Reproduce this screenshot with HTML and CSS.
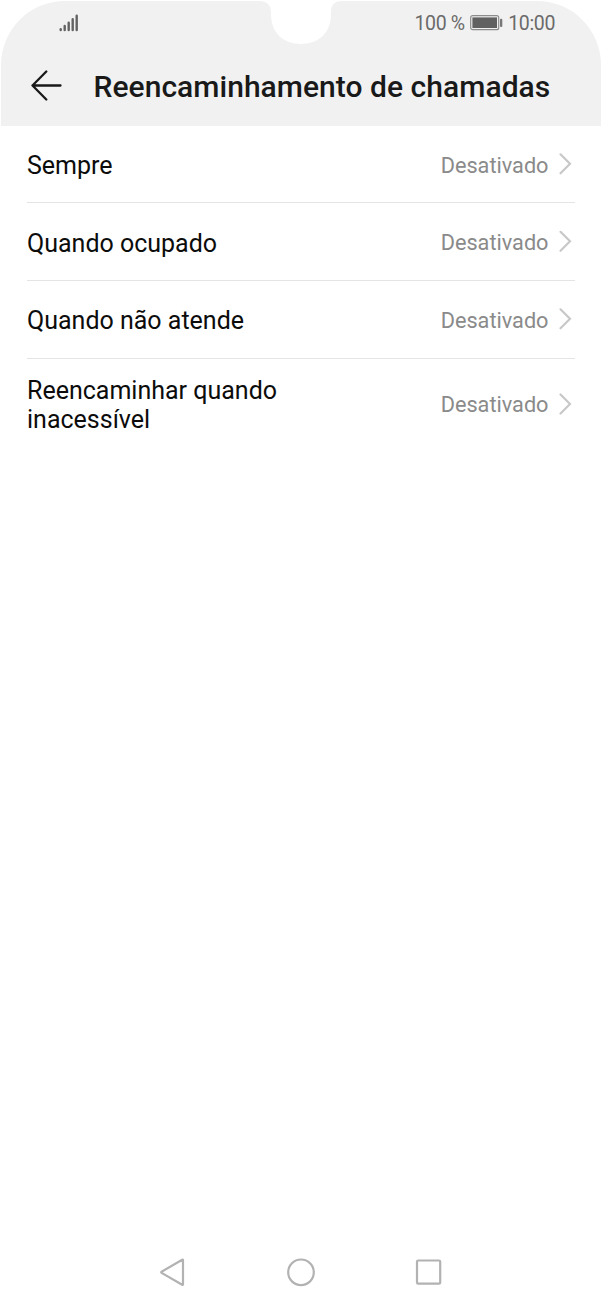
FILE: index.html
```html
<!DOCTYPE html>
<html lang="pt">
<head>
<meta charset="utf-8">
<title>Reencaminhamento de chamadas</title>
<link rel="stylesheet" href="styles.css">
</head>
<body>
<div class="phone">
  <header class="header">
    <svg class="notch" width="90" height="46" viewBox="0 0 90 46"><path d="M0.500 0H91V1H86.500C79.500 1 76 5 76 12V14C76 33 63.500 44 46 44S16 33 16 14V12C16 5 11.500 1 4.500 1H0.500Z" fill="#fff"/></svg>
    <div class="status">
      <svg class="signal" width="20" height="18" viewBox="0 0 20 18"><path d="M1.700 15.300V16M5.700 12V16M9.700 8.700V16M13.700 5.200V16M17.700 1.700V16" fill="none" stroke="#626262" stroke-width="2.400" stroke-linecap="round"/></svg>
      <span class="percent">100 %</span>
      <svg class="battery" width="34" height="16" viewBox="0 0 34 16"><rect x="1.700" y="0.700" width="28" height="14" rx="2" fill="none" stroke="#8c8c8c" stroke-width="1.200"/><rect x="3.400" y="2.400" width="24.600" height="10.600" fill="#616161"/><rect x="31" y="3.700" width="2.300" height="8.300" rx="1" fill="#777"/></svg>
      <span class="clock">10:00</span>
    </div>
    <div class="titlebar">
      <svg class="back" width="32" height="32" viewBox="0 0 32 32"><path d="M30.500 15.500H2.500M16.300 1.500L2.500 15.500L16.300 29.500" fill="none" stroke="#191919" stroke-width="2.300" stroke-linecap="round" stroke-linejoin="round"/></svg>
      <h1 class="title">Reencaminhamento de chamadas</h1>
    </div>
  </header>
  <main class="list">
    <div class="row"><span class="label">Sempre</span><span class="value">Desativado</span><svg class="chevron" width="14" height="24" viewBox="0 0 14 24"><path d="M2.500 2.300L12 11.800L2.500 21.300" /></svg></div>
    <div class="row"><span class="label">Quando ocupado</span><span class="value">Desativado</span><svg class="chevron" width="14" height="24" viewBox="0 0 14 24"><path d="M2.500 1.800L12 11.300L2.500 20.800" /></svg></div>
    <div class="row"><span class="label">Quando não atende</span><span class="value">Desativado</span><svg class="chevron" width="14" height="24" viewBox="0 0 14 24"><path d="M2.500 2.300L12 11.800L2.500 21.300" /></svg></div>
    <div class="row row-tall"><span class="label">Reencaminhar quando<br>inacessível</span><span class="value">Desativado</span><svg class="chevron" width="14" height="24" viewBox="0 0 14 24"><path d="M2.500 1.500L12 11L2.500 20.500" /></svg></div>
  </main>
  <nav class="nav">
    <svg width="30" height="30" viewBox="0 0 30 30"><path d="M25.200 2.700Q26 2.300 26 3.300V27.300Q26 28.300 25.200 27.800L4.600 15.900Q3.700 15.300 4.600 14.700Z"/></svg>
    <svg width="30" height="30" viewBox="0 0 30 30"><circle cx="15" cy="15.300" r="12.800"/></svg>
    <svg width="30" height="30" viewBox="0 0 30 30"><rect x="3" y="3.500" width="23.200" height="23.200" rx="1.200"/></svg>
  </nav>
</div>
</body>
</html>
```
FILE: styles.css
```css
body {
  margin: 0;
  background: #fff;
  font-family: Roboto, sans-serif;
}

.phone {
  box-sizing: border-box;
  width: 602px;
  height: 1306px;
  padding: 1px;
  display: flex;
  flex-direction: column;
}

.header {
  height: 124.5px;
  background: #f1f1f1;
  border-radius: 64px 64px 0 0;
}

.notch {
  position: absolute;
  left: 255px;
  top: 0;
}

.status {
  display: flex;
  align-items: center;
  height: 44px;
  padding: 0 46px 0 57.5px;
  font-size: 19.5px;
  letter-spacing: -0.35px;
  color: #6a6a6a;
}

.percent {
  margin-left: auto;
}

.battery {
  margin: 0 5px 0 4.5px;
}

.titlebar {
  display: flex;
  align-items: center;
  height: 81.5px;
  padding-left: 28.5px;
}

.title {
  margin: 2px 0 0 32px;
  font-size: 30px;
  font-weight: 500;
  line-height: 36px;
  letter-spacing: 0.04px;
  color: #191919;
  white-space: nowrap;
}

.list {
  flex: 1;
  padding: 0 26px;
}

.row {
  box-sizing: border-box;
  display: flex;
  align-items: center;
  height: 77.7px;
  border-bottom: 1px solid #e4e4e4;
}

.row .label {
  padding-top: 4px;
}

.row .value {
  padding-top: 2.5px;
}

.row-tall {
  height: 92px;
  border-bottom: 0;
}

.row-tall .label {
  padding-top: 1.5px;
}

.row-tall .value {
  padding-top: 0;
}

.label {
  flex: 1;
  font-size: 25px;
  line-height: 29.5px;
  color: #0c0c0c;
}

.value {
  font-size: 21.7px;
  color: #8a8a8a;
}

.chevron {
  margin: 0 3px 0 9.5px;
  fill: none;
  stroke: #c8c8c8;
  stroke-width: 2.2;
  stroke-linecap: round;
}

.nav {
  display: flex;
  justify-content: space-between;
  height: 48px;
  padding: 0 157px 0 156px;
}

.nav svg {
  fill: none;
  stroke: #b2b2b2;
  stroke-width: 2.2;
}
```
